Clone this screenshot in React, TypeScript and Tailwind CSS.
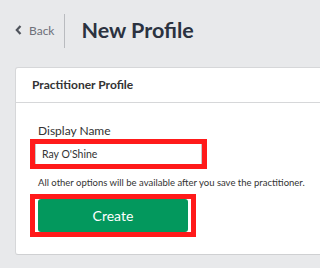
const App = () => {
  return (
    <div className="w-[320px] h-[268px] overflow-hidden bg-[#e8e9eb] font-['Lato',sans-serif]">
      <div className="flex items-center h-[60px] pl-[15px] pt-[1px]">
        <button className="flex items-center gap-[7px] text-[12px] text-[#6d7079]">
          <svg width="7" height="10" viewBox="0 0 7 10" className="mt-[-1px]">
            <path d="M5.5 1 L1.8 5 L5.5 9" fill="none" stroke="#50545c" strokeWidth="2.2" />
          </svg>
          <span>Back</span>
        </button>
        <div className="ml-[10px] w-px h-[34px] bg-[#b9bbbf]" />
        <h1 className="ml-[16px] text-[21.5px] font-bold text-[#2b3240] leading-none">New Profile</h1>
      </div>
      <div className="ml-[15px] mt-[7px] w-[330px] bg-white border border-[#d6d7d9] border-b-[#cfd0d2] rounded-[3px]">
        <div className="h-[35px] flex items-center pl-[16px] border-b border-[#d6d7d9]">
          <h2 className="text-[12px] font-bold text-[#333]">Practitioner Profile</h2>
        </div>
        <div className="pt-[20px] pb-[17px] pl-[14px]">
          <label className="block pl-[8px] text-[12px] leading-[16px] text-[#333]">Display Name</label>
          <div className="w-[177px] h-[30px] border-[5px] border-[#ff1a1a]">
            <input
              defaultValue="Ray O'Shine"
              className="block w-full h-full px-[6px] text-[10.5px] text-[#333] border-x border-[#c8c8c8] outline-none"
            />
          </div>
          <p className="mt-[7px] pl-[8px] text-[9.5px] leading-[14px] text-[#333]">
            All other options will be available after you save the practitioner.
          </p>
          <div className="mt-[4px] w-[166px] h-[43px] border-[5px] border-[#ff1a1a] px-[3px]">
            <button className="w-full h-full bg-[#03985d] rounded-[3px] text-white text-[14px]">
              Create
            </button>
          </div>
        </div>
      </div>
    </div>
  );
};

export default App;
